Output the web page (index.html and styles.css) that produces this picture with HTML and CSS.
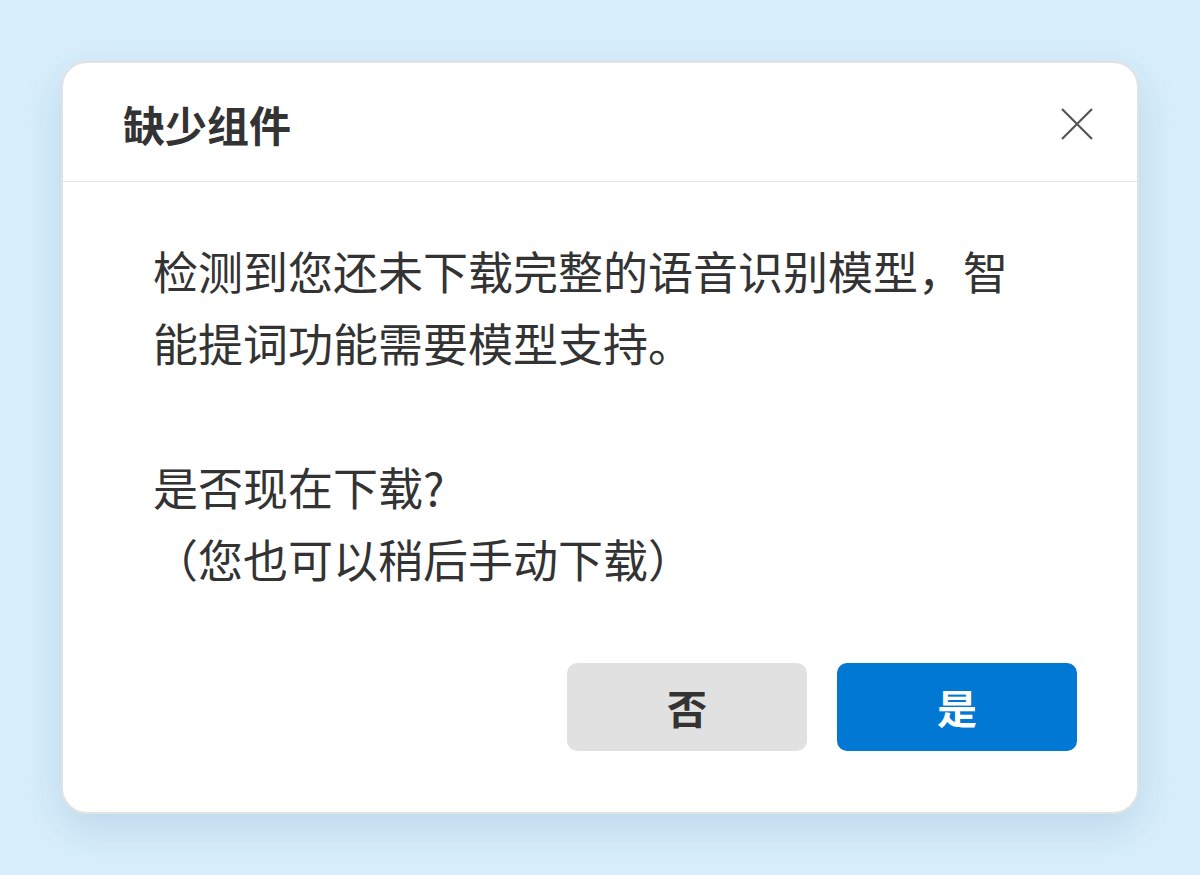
FILE: index.html
```html
<!DOCTYPE html>
<html lang="zh-CN">
<head>
<meta charset="utf-8">
<title>缺少组件</title>
<link rel="stylesheet" href="styles.css">
</head>
<body>
<div class="dialog">
  <div class="dialog-header">
    <h1 class="dialog-title">缺少组件</h1>
    <button class="close-btn" aria-label="关闭">
      <svg width="32" height="32" viewBox="0 0 32 32"><path d="M1 1 L31 31 M31 1 L1 31" stroke="#555" stroke-width="2.2" fill="none"/></svg>
    </button>
  </div>
  <div class="dialog-body">
    <p class="message">检测到您还未下载完整的语音识别模型，智能提词功能需要模型支持。</p>
    <p class="message blank">&nbsp;</p>
    <p class="message">是否现在下载?</p>
    <p class="message">（您也可以稍后手动下载）</p>
  </div>
  <div class="dialog-footer">
    <button class="btn btn-no">否</button>
    <button class="btn btn-yes">是</button>
  </div>
</div>
</body>
</html>
```

FILE: styles.css
```css
* { box-sizing: border-box; }
html, body {
  margin: 0;
  padding: 0;
  width: 1200px;
  height: 875px;
  overflow: hidden;
  background: #d8eefb;
  font-family: "Noto Sans CJK SC", "Noto Sans", sans-serif;
}
body {
  padding: 61px 0 0 61px;
}
.dialog {
  width: 1078px;
  height: 753px;
  background: #fff;
  border: 2px solid #e2e2e2;
  border-radius: 26px;
  box-shadow: 0 14px 40px rgba(40, 100, 140, 0.16);
  display: flex;
  flex-direction: column;
}
.dialog-header {
  height: 119px;
  border-bottom: 1px solid #e4e4e4;
  display: flex;
  align-items: center;
  justify-content: space-between;
  padding: 4px 44px 0 60px;
}
.dialog-title {
  margin: 0;
  font-size: 42px;
  font-weight: 700;
  color: #333;
  line-height: 1;
  letter-spacing: 0;
}
.close-btn {
  width: 32px;
  height: 32px;
  padding: 0;
  border: 0;
  background: transparent;
  display: flex;
  align-items: center;
  justify-content: center;
}
.dialog-body {
  padding: 53px 100px 0 90px;
}
.message {
  margin: 0;
  font-size: 45px;
  line-height: 72px;
  color: #333;
}
.dialog-footer {
  margin-top: 68px;
  display: flex;
  justify-content: flex-end;
  gap: 30px;
  padding-right: 60px;
}
.btn {
  width: 240px;
  height: 88px;
  border: 0;
  border-radius: 10px;
  font-family: "Noto Sans CJK SC", "Noto Sans", sans-serif;
  font-size: 40px;
  font-weight: 700;
  line-height: 1;
  padding: 0;
}
.btn-no {
  background: #e1e1e1;
  color: #333;
}
.btn-yes {
  background: #0078d4;
  color: #fff;
}
```
